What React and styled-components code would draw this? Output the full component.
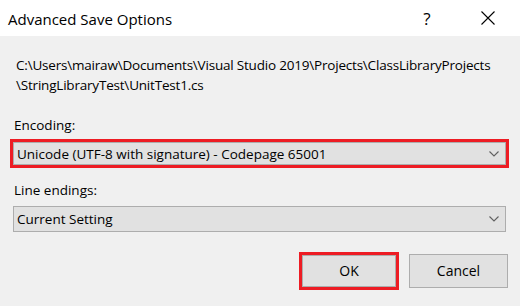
import React from 'react'
import styled, { createGlobalStyle } from 'styled-components'

const GlobalStyle = createGlobalStyle`
  html, body {
    margin: 0;
    padding: 0;
    background: #f0f0f0;
  }
  body {
    font-family: "Open Sans", "Noto Sans", "Liberation Sans", sans-serif;
    color: #000;
  }
`

const Window = styled.div`
  width: 520px;
  height: 306px;
  display: flex;
  flex-direction: column;
  background: #f0f0f0;
  overflow: hidden;
`

const TitleBar = styled.div`
  height: 36px;
  flex: none;
  display: flex;
  align-items: center;
  background: #fff;
  padding: 0 9px 0 8px;
`

const Title = styled.div`
  flex: 1;
  font-size: 15px;
  margin-top: 1px;
`

const TitleButton = styled.div`
  width: 46px;
  height: 36px;
  display: flex;
  align-items: center;
  justify-content: center;
  font-size: 17px;
  margin-left: ${(p) => p.gap || 0}px;
`

const Content = styled.div`
  flex: 1;
  display: flex;
  flex-direction: column;
  padding: 19px 11px 0 10px;
  font-size: 13.5px;
  line-height: 20px;
`

const PathText = styled.div`
  padding-left: 6px;
  letter-spacing: -0.2px;
  margin-bottom: ${(p) => p.mb}px;
`

const Label = styled.div`
  padding-left: 4px;
  margin-bottom: ${(p) => p.mb}px;
`

const Highlight = styled.div`
  border: 3px solid #ed1c24;
  display: flex;
  margin-bottom: ${(p) => p.mb || 0}px;
`

const Select = styled.div`
  flex: ${(p) => (p.plain ? 'none' : 1)};
  height: ${(p) => p.h}px;
  box-sizing: border-box;
  border: 1px solid #adadad;
  background: #e1e1e1;
  display: flex;
  align-items: center;
  padding: 0 6px 0 3px;
  margin: ${(p) => (p.plain ? '0 3px' : '0')};
  margin-bottom: ${(p) => p.mb || 0}px;
`

const SelectText = styled.span`
  flex: 1;
`

const Buttons = styled.div`
  display: flex;
  justify-content: flex-end;
  align-items: center;
  gap: 10px;
  padding-right: 1px;
`

const Button = styled.div`
  width: ${(p) => p.w}px;
  height: ${(p) => p.h}px;
  box-sizing: border-box;
  border: 1px solid #adadad;
  background: #e1e1e1;
  display: flex;
  align-items: center;
  justify-content: center;
  font-size: 14px;
`

const Chevron = () => (
  <svg width="10" height="6" viewBox="0 0 10 6">
    <path d="M0.5 0.5 L5 5 L9.5 0.5" fill="none" stroke="#606060" strokeWidth="1.1" />
  </svg>
)

const CloseIcon = () => (
  <svg width="14" height="14" viewBox="0 0 14 14">
    <path d="M0.5 0.5 L13.5 13.5 M13.5 0.5 L0.5 13.5" stroke="#000" strokeWidth="1.1" />
  </svg>
)

export default function App() {
  return (
    <Window>
      <GlobalStyle />
      <TitleBar>
        <Title>Advanced Save Options</Title>
        <TitleButton>?</TitleButton>
        <TitleButton gap={15}>
          <CloseIcon />
        </TitleButton>
      </TitleBar>
      <Content>
        <PathText mb={20}>
          C:\Users\mairaw\Documents\Visual Studio 2019\Projects\ClassLibraryProjects
          <br />
          \StringLibraryTest\UnitTest1.cs
        </PathText>
        <Label mb={4}>Encoding:</Label>
        <Highlight mb={12}>
          <Select h={23}>
            <SelectText>Unicode (UTF-8 with signature) - Codepage 65001</SelectText>
            <Chevron />
          </Select>
        </Highlight>
        <Label mb={6}>Line endings:</Label>
        <Select h={26} plain mb={20}>
          <SelectText>Current Setting</SelectText>
          <Chevron />
        </Select>
        <Buttons>
          <Highlight>
            <Button w={94} h={32}>OK</Button>
          </Highlight>
          <Button w={99} h={34}>Cancel</Button>
        </Buttons>
      </Content>
    </Window>
  )
}
